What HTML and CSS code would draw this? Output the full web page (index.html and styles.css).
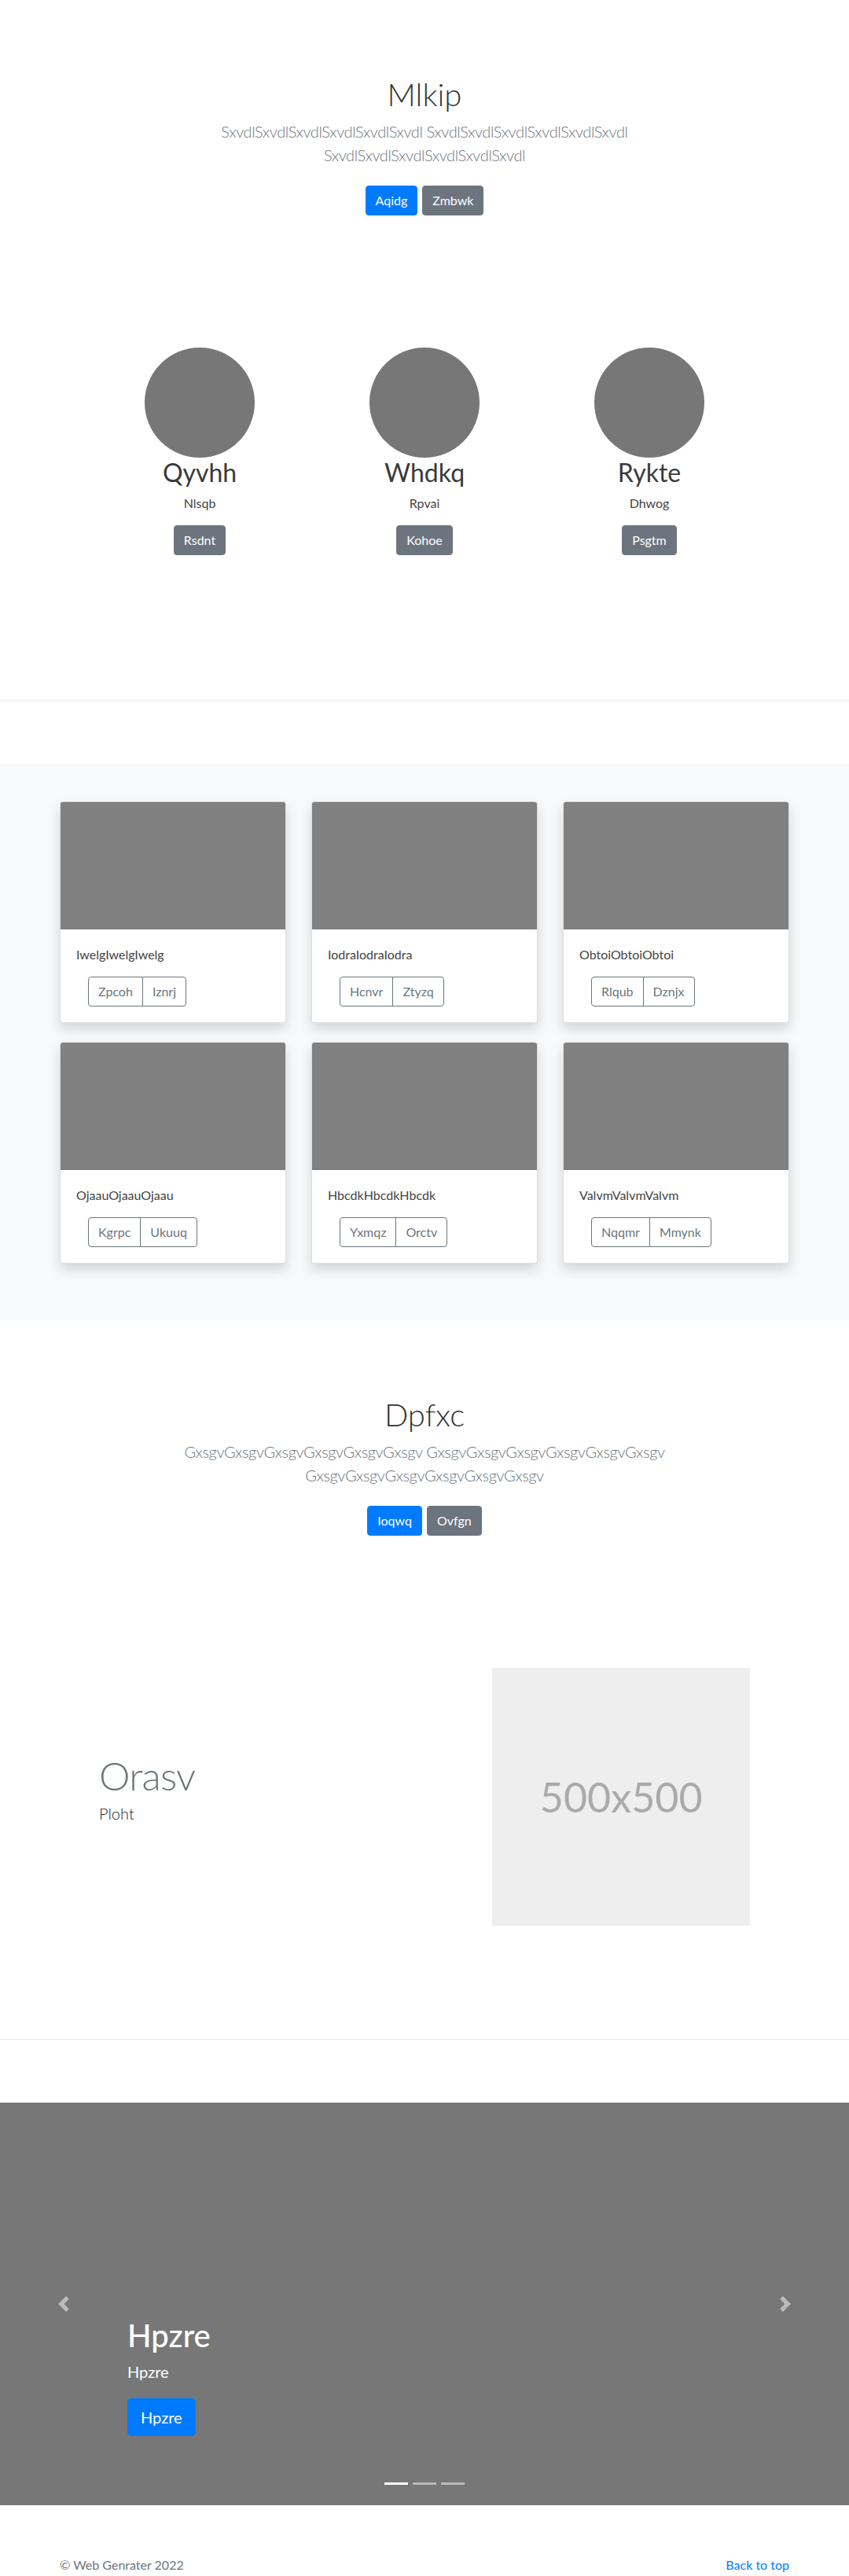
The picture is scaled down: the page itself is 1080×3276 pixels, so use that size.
FILE: index.html
```html
<!DOCTYPE html>
<html lang="en">
<head>
<meta charset="utf-8">
<title>Album</title>
<link rel="stylesheet" href="styles.css">
</head>
<body>
<main>
  <section class="jumbo">
    <div class="jumbo-inner">
      <h1 class="jumbo-title">Mlkip</h1>
      <p class="lead muted">SxvdlSxvdlSxvdlSxvdlSxvdlSxvdl SxvdlSxvdlSxvdlSxvdlSxvdlSxvdl SxvdlSxvdlSxvdlSxvdlSxvdlSxvdl</p>
      <p class="jumbo-actions"><a class="btn btn-primary" href="#">Aqidg</a><a class="btn btn-secondary" href="#">Zmbwk</a></p>
    </div>
  </section>

  <section class="marketing">
    <div class="trio">
      <div class="member">
        <div class="avatar"></div>
        <h2 class="member-name">Qyvhh</h2>
        <p class="member-role">Nlsqb</p>
        <p class="member-action"><a class="btn btn-secondary" href="#">Rsdnt</a></p>
      </div>
      <div class="member">
        <div class="avatar"></div>
        <h2 class="member-name">Whdkq</h2>
        <p class="member-role">Rpvai</p>
        <p class="member-action"><a class="btn btn-secondary" href="#">Kohoe</a></p>
      </div>
      <div class="member">
        <div class="avatar"></div>
        <h2 class="member-name">Rykte</h2>
        <p class="member-role">Dhwog</p>
        <p class="member-action"><a class="btn btn-secondary" href="#">Psgtm</a></p>
      </div>
    </div>
  </section>

  <hr class="divider">

  <section class="album">
    <div class="album-grid">
      <div class="card">
        <div class="card-img"></div>
        <div class="card-body">
          <p class="card-text">IwelgIwelgIwelg</p>
          <div class="btn-group"><a class="btn btn-outline" href="#">Zpcoh</a><a class="btn btn-outline" href="#">Iznrj</a></div>
        </div>
      </div>
      <div class="card">
        <div class="card-img"></div>
        <div class="card-body">
          <p class="card-text">IodraIodraIodra</p>
          <div class="btn-group"><a class="btn btn-outline" href="#">Hcnvr</a><a class="btn btn-outline" href="#">Ztyzq</a></div>
        </div>
      </div>
      <div class="card">
        <div class="card-img"></div>
        <div class="card-body">
          <p class="card-text">ObtoiObtoiObtoi</p>
          <div class="btn-group"><a class="btn btn-outline" href="#">Rlqub</a><a class="btn btn-outline" href="#">Dznjx</a></div>
        </div>
      </div>
      <div class="card">
        <div class="card-img"></div>
        <div class="card-body">
          <p class="card-text">OjaauOjaauOjaau</p>
          <div class="btn-group"><a class="btn btn-outline" href="#">Kgrpc</a><a class="btn btn-outline" href="#">Ukuuq</a></div>
        </div>
      </div>
      <div class="card">
        <div class="card-img"></div>
        <div class="card-body">
          <p class="card-text">HbcdkHbcdkHbcdk</p>
          <div class="btn-group"><a class="btn btn-outline" href="#">Yxmqz</a><a class="btn btn-outline" href="#">Orctv</a></div>
        </div>
      </div>
      <div class="card">
        <div class="card-img"></div>
        <div class="card-body">
          <p class="card-text">ValvmValvmValvm</p>
          <div class="btn-group"><a class="btn btn-outline" href="#">Nqqmr</a><a class="btn btn-outline" href="#">Mmynk</a></div>
        </div>
      </div>
    </div>
  </section>

  <section class="jumbo">
    <div class="jumbo-inner">
      <h1 class="jumbo-title">Dpfxc</h1>
      <p class="lead muted">GxsgvGxsgvGxsgvGxsgvGxsgvGxsgv GxsgvGxsgvGxsgvGxsgvGxsgvGxsgv GxsgvGxsgvGxsgvGxsgvGxsgvGxsgv</p>
      <p class="jumbo-actions"><a class="btn btn-primary" href="#">Ioqwq</a><a class="btn btn-secondary" href="#">Ovfgn</a></p>
    </div>
  </section>

  <section class="featurette">
    <div class="featurette-row">
      <div class="featurette-text">
        <h2 class="featurette-heading">Orasv</h2>
        <p class="lead">Ploht</p>
      </div>
      <div class="featurette-media">
        <div class="placeholder">500x500</div>
      </div>
    </div>
  </section>

  <hr class="divider">

  <section class="carousel">
    <a class="carousel-control prev" href="#" aria-label="Previous">
      <svg width="20" height="20" viewBox="0 0 8 8"><path d="M5.25 0l-4 4 4 4 1.5-1.5L4.25 4l2.5-2.5L5.25 0z" fill="#fff"/></svg>
    </a>
    <a class="carousel-control next" href="#" aria-label="Next">
      <svg width="20" height="20" viewBox="0 0 8 8"><path d="M2.75 0l-1.5 1.5L3.75 4l-2.5 2.5L2.75 8l4-4-4-4z" fill="#fff"/></svg>
    </a>
    <div class="carousel-caption">
      <h1 class="caption-title">Hpzre</h1>
      <p class="caption-text">Hpzre</p>
      <p class="caption-action"><a class="btn btn-primary btn-lg" href="#">Hpzre</a></p>
    </div>
    <ol class="indicators">
      <li class="active"></li>
      <li></li>
      <li></li>
    </ol>
  </section>

  <footer class="footer">
    <p class="copy">© Web Genrater 2022</p>
    <p class="back"><a href="#">Back to top</a></p>
  </footer>
</main>
</body>
</html>
```
FILE: styles.css
```css
* { box-sizing: border-box; }
html, body { margin: 0; padding: 0; }
body {
  font-family: Lato, "Open Sans", sans-serif;
  font-size: 16px;
  line-height: 1.5;
  color: #212529;
  background: #fff;
}
p { margin: 0 0 16px; }
h1, h2 { margin: 0 0 8px; }
a { text-decoration: none; }

.btn {
  display: inline-block;
  font-size: 16px;
  line-height: 24px;
  padding: 6px 12px;
  border: 1px solid transparent;
  border-radius: 4px;
  font-weight: 400;
}
.btn-primary { background: #007bff; border-color: #007bff; color: #fff; }
.btn-secondary { background: #6c757d; border-color: #6c757d; color: #fff; }
.btn-outline { background: transparent; border-color: #6c757d; color: #6c757d; }
.btn-lg { font-size: 20px; line-height: 30px; padding: 8px 16px; border-radius: 4.8px; }

/* jumbotron */
.jumbo { padding: 96px 0; text-align: center; }
.jumbo-inner { max-width: 660px; margin: 0 auto; padding: 0 15px; }
.jumbo-title { font-size: 40px; line-height: 48px; font-weight: 300; color: #333; }
.lead { font-size: 20px; line-height: 30px; font-weight: 300; }
.jumbo .lead { letter-spacing: -0.4px; }
.muted { color: #6c757d; }
.jumbo-actions { display: flex; justify-content: center; gap: 6px; margin: 0; padding: 8px 0; }

/* marketing trio */
.marketing { padding: 64px 0; }
.trio { width: 858px; margin: 0 auto; display: grid; grid-template-columns: repeat(3, 1fr); }
.member { text-align: center; padding: 0 15px; margin-bottom: 24px; }
.avatar { width: 140px; height: 140px; border-radius: 50%; background: #777; margin: 0 auto; }
.member-name { font-size: 32px; line-height: 38.4px; font-weight: 400; color: #3a3a3a; }
.member-role { margin: 0 12px 16px; color: #444; }
.member-action { margin: 0 12px 16px; }

.divider { margin: 80px 0; border: 0; border-top: 1px solid rgba(0,0,0,.1); height: 0; }

/* album */
.album { background: #f8f9fa; padding: 48px 0; }
.album-grid { width: 928px; margin: 0 auto; display: grid; grid-template-columns: repeat(3, 288px); column-gap: 32px; }
.card {
  background: #fff;
  border: 1px solid rgba(0,0,0,.125);
  border-radius: 4px;
  box-shadow: 0 8px 16px rgba(0,0,0,.15);
  margin-bottom: 24px;
  overflow: hidden;
}
.card-img { height: 162px; background: #808080; }
.card-body { padding: 20px; }
.card-text { color: #444; }
.btn-group { display: inline-flex; margin-left: 15px; }
.btn-group .btn:first-child { border-top-right-radius: 0; border-bottom-right-radius: 0; }
.btn-group .btn + .btn { margin-left: -1px; border-top-left-radius: 0; border-bottom-left-radius: 0; }

/* featurette */
.featurette { padding: 64px 0; }
.featurette-row { width: 858px; margin: 0 auto; display: flex; align-items: center; }
.featurette-text { width: 58.3333%; padding: 0 15px; }
.featurette-media { width: 41.6667%; padding: 0 15px; }
.featurette-heading { font-size: 50px; line-height: 1; font-weight: 300; letter-spacing: -0.8px; color: #6c757d; }
.placeholder {
  width: 100%;
  aspect-ratio: 1 / 1;
  background: #eee;
  color: #aaa;
  font-size: 52px;
  display: flex;
  align-items: center;
  justify-content: center;
}

/* carousel */
.carousel { position: relative; height: 512px; background: #777; margin-bottom: 64px; color: #fff; }
.carousel-control {
  position: absolute; top: 0; bottom: 0; width: 15%;
  display: flex; align-items: center; justify-content: center;
  opacity: .5;
}
.carousel-control.prev { left: 0; }
.carousel-control.next { right: 0; }
.carousel-control svg { display: block; }
.carousel-caption { position: absolute; left: 15%; right: 15%; bottom: 48px; padding: 20px 0; text-align: left; }
.caption-title { font-size: 40px; line-height: 48px; font-weight: 500; }
.caption-text { font-size: 20px; line-height: 28px; margin-bottom: 20px; }
.caption-action { margin: 0 0 20px; display: flex; }
.indicators {
  position: absolute; left: 15%; right: 15%; bottom: 0;
  margin: 0 0 16px; padding: 0; list-style: none;
  display: flex; justify-content: center;
}
.indicators li {
  width: 30px; height: 3px; margin: 10px 3px;
  background: #fff; opacity: .5;
}
.indicators li.active { opacity: 1; }

/* footer */
.footer { width: 928px; margin: 0 auto; display: flex; justify-content: space-between; color: #6c757d; }
.footer p { margin: 0; }
.back a { color: #007bff; }
```
